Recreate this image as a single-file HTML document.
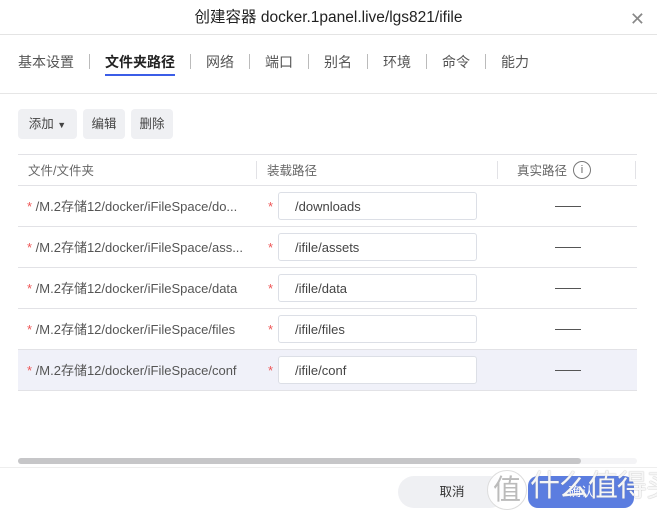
<!DOCTYPE html>
<html><head><meta charset="utf-8"><style>
*{box-sizing:border-box;margin:0;padding:0}
body{width:657px;height:513px;background:#fff;font-family:"Liberation Sans","Noto Sans CJK SC",sans-serif;position:relative;overflow:hidden;color:#333}
.a{position:absolute}
.title{top:0;left:0;width:657px;height:35px;border-bottom:1px solid #e4e4e4;text-align:center;line-height:35px;font-size:15.5px;color:#222}
.close{right:12px;top:9px;font-size:18px;color:#888}
.tabs{top:52px;left:18px;font-size:14px;color:#555;white-space:nowrap;line-height:20px}
.tabs span{display:inline-block}
.sep{width:1px;height:15px;background:#bbb;margin:0 15px;vertical-align:-2px}
.act{color:#222;font-weight:bold}
.ul{left:105px;top:74px;width:70px;height:2px;background:#3b5de7}
.hr{left:0;width:657px;height:1px;background:#e6e6e6}
.btn{top:109px;height:30px;background:#eff0f3;border-radius:4px;font-size:12.5px;color:#444;line-height:30px;text-align:center}
.tb{left:18px;width:619px}
.row{position:absolute;left:18px;width:619px;height:41px;border-bottom:1px solid #e2e2e6;font-size:13px;color:#555}
.row .p{position:absolute;left:9px;top:0;line-height:41px}
.st{color:#e55}
.row .s2{position:absolute;left:250px;line-height:41px}
.inp{position:absolute;left:260px;top:6px;width:199px;height:28px;border:1px solid #dcdfe6;border-radius:3px;background:#fff;line-height:27px;padding-left:16px;font-size:13px;color:#444}
.dash{position:absolute;left:537px;top:20px;width:26px;height:1px;background:#555}
</style></head><body>
<div class="a title">创建容器 docker.1panel.live/lgs821/ifile</div>
<div class="a close">✕</div>
<div class="a tabs"><span>基本设置</span><span class="sep"></span><span class="act">文件夹路径</span><span class="sep"></span><span>网络</span><span class="sep"></span><span>端口</span><span class="sep"></span><span>别名</span><span class="sep"></span><span>环境</span><span class="sep"></span><span>命令</span><span class="sep"></span><span>能力</span></div>
<div class="a ul"></div>
<div class="a hr" style="top:93px"></div>
<div class="a btn" style="left:18px;width:59px">添加 <span style="font-size:9px">▼</span></div>
<div class="a btn" style="left:83px;width:42px">编辑</div>
<div class="a btn" style="left:131px;width:42px">删除</div>
<div class="a tb" style="top:154px;height:32px;border-top:1px solid #e2e2e6;border-bottom:1px solid #e2e2e6;font-size:12.5px;color:#666">
<span class="a" style="left:10px;top:5px">文件/文件夹</span>
<span class="a" style="left:238px;top:6px;width:1px;height:18px;background:#e2e2e6"></span>
<span class="a" style="left:249px;top:5px">装载路径</span>
<span class="a" style="left:479px;top:6px;width:1px;height:18px;background:#e2e2e6"></span>
<span class="a" style="left:499px;top:5px">真实路径</span>
<span class="a" style="left:555px;top:6px;width:18px;height:18px;border:1px solid #777;border-radius:50%;text-align:center;line-height:16px;font-size:11px">i</span>
<span class="a" style="left:617px;top:6px;width:1px;height:18px;background:#e2e2e6"></span>
</div>
<div class="row" style="top:186px"><span class="p"><span class="st">*</span> /M.2存储12/docker/iFileSpace/do...</span><span class="s2 st">*</span><div class="inp">/downloads</div><div class="dash"></div></div>
<div class="row" style="top:227px"><span class="p"><span class="st">*</span> /M.2存储12/docker/iFileSpace/ass...</span><span class="s2 st">*</span><div class="inp">/ifile/assets</div><div class="dash"></div></div>
<div class="row" style="top:268px"><span class="p"><span class="st">*</span> /M.2存储12/docker/iFileSpace/data</span><span class="s2 st">*</span><div class="inp">/ifile/data</div><div class="dash"></div></div>
<div class="row" style="top:309px"><span class="p"><span class="st">*</span> /M.2存储12/docker/iFileSpace/files</span><span class="s2 st">*</span><div class="inp">/ifile/files</div><div class="dash"></div></div>
<div class="row" style="top:350px;background:#f0f1f9"><span class="p"><span class="st">*</span> /M.2存储12/docker/iFileSpace/conf</span><span class="s2 st">*</span><div class="inp">/ifile/conf</div><div class="dash"></div></div>
<div class="a" style="left:18px;top:458px;width:619px;height:6px;background:#f4f4f6;border-radius:3px"></div>
<div class="a" style="left:18px;top:458px;width:563px;height:6px;background:#c6c6c8;border-radius:3px"></div>
<div class="a hr" style="top:467px;background:#eee"></div>
<div class="a" style="left:398px;top:476px;width:108px;height:32px;border-radius:16px;background:#eff0f3;font-size:12.5px;line-height:32px;text-align:center;color:#333">取消</div>
<div class="a" style="left:528px;top:476px;width:106px;height:32px;border-radius:10px;background:#5b7de0;font-size:12.5px;line-height:32px;text-align:center;color:#fff">确认</div>
<div class="a" style="left:487px;top:470px;width:40px;height:40px;border-radius:50%;background:rgba(255,255,255,.85);border:1px solid #ddd;font-size:28px;line-height:38px;text-align:center;color:#bbb">值</div>
<div class="a" style="left:530px;top:467px;font-size:30px;line-height:40px;color:rgba(255,255,255,.92);text-shadow:0 0 1px #888;white-space:nowrap;letter-spacing:-1px">什么值得买</div>
</body></html>
